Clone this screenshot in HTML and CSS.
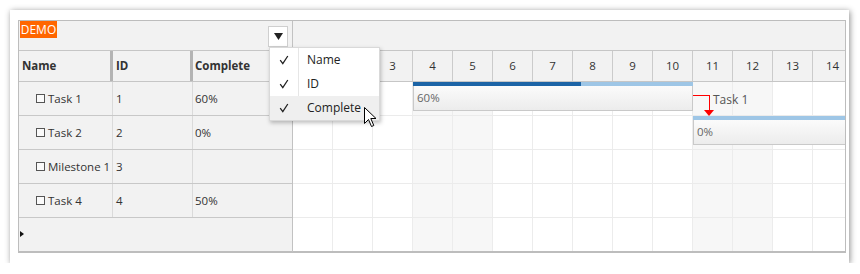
FILE: index.html
```html
<!DOCTYPE html>
<html>
<head>
<meta charset="utf-8">
<link rel="stylesheet" href="styles.css">
</head>
<body>
<div class="frame">
  <div class="gantt">
    <div class="left">
      <div class="toolbar">
        <span class="demo">DEMO</span>
        <span class="ddbtn"><svg width="9" height="7" viewBox="0 0 9 7"><path d="M0 0 H9 L4.5 7 Z" fill="#222"/></svg></span>
      </div>
      <div class="ghead">
        <div class="hc cname">Name</div>
        <div class="hc cid">ID</div>
        <div class="hc ccomp">Complete</div>
      </div>
      <div class="grow">
        <div class="gc cname"><span class="cb"></span>Task 1</div>
        <div class="gc cid">1</div>
        <div class="gc ccomp">60%</div>
      </div>
      <div class="grow">
        <div class="gc cname"><span class="cb"></span>Task 2</div>
        <div class="gc cid">2</div>
        <div class="gc ccomp">0%</div>
      </div>
      <div class="grow">
        <div class="gc cname"><span class="cb"></span>Milestone 1</div>
        <div class="gc cid">3</div>
        <div class="gc ccomp"></div>
      </div>
      <div class="grow">
        <div class="gc cname"><span class="cb"></span>Task 4</div>
        <div class="gc cid">4</div>
        <div class="gc ccomp">50%</div>
      </div>
      <div class="newrow"><span class="tri"></span></div>
    </div>
    <div class="right">
      <div class="ttop"></div>
      <div class="days">
        <div class="d"><span class="hid">1</span></div><div class="d"><span class="hid">2</span></div><div class="d">3</div><div class="d">4</div><div class="d">5</div><div class="d">6</div><div class="d">7</div><div class="d">8</div><div class="d">9</div><div class="d">10</div><div class="d">11</div><div class="d">12</div><div class="d">13</div><div class="d">14</div>
      </div>
      <div class="tbody">
        <div class="trow"><div class="tc"></div><div class="tc"></div><div class="tc"></div><div class="tc we"></div><div class="tc we"></div><div class="tc"></div><div class="tc"></div><div class="tc"></div><div class="tc"></div><div class="tc"></div><div class="tc we"></div><div class="tc we"></div><div class="tc"></div><div class="tc"></div></div>
        <div class="trow"><div class="tc"></div><div class="tc"></div><div class="tc"></div><div class="tc we"></div><div class="tc we"></div><div class="tc"></div><div class="tc"></div><div class="tc"></div><div class="tc"></div><div class="tc"></div><div class="tc we"></div><div class="tc we"></div><div class="tc"></div><div class="tc"></div></div>
        <div class="trow"><div class="tc"></div><div class="tc"></div><div class="tc"></div><div class="tc we"></div><div class="tc we"></div><div class="tc"></div><div class="tc"></div><div class="tc"></div><div class="tc"></div><div class="tc"></div><div class="tc we"></div><div class="tc we"></div><div class="tc"></div><div class="tc"></div></div>
        <div class="trow"><div class="tc"></div><div class="tc"></div><div class="tc"></div><div class="tc we"></div><div class="tc we"></div><div class="tc"></div><div class="tc"></div><div class="tc"></div><div class="tc"></div><div class="tc"></div><div class="tc we"></div><div class="tc we"></div><div class="tc"></div><div class="tc"></div></div>
        <div class="trow last"><div class="tc"></div><div class="tc"></div><div class="tc"></div><div class="tc we"></div><div class="tc we"></div><div class="tc"></div><div class="tc"></div><div class="tc"></div><div class="tc"></div><div class="tc"></div><div class="tc we"></div><div class="tc we"></div><div class="tc"></div><div class="tc"></div></div>

        <div class="bar task1">
          <div class="prog"><div class="done" style="width:60%"></div></div>
          <div class="bbody">60%</div>
        </div>
        <div class="blabel">Task 1</div>
        <div class="link-h"></div>
        <div class="link-v"></div>
        <div class="link-arrow"></div>
        <div class="bar task2">
          <div class="prog"></div>
          <div class="bbody">0%</div>
        </div>
      </div>
    </div>

    <div class="menu">
      <div class="mi"><span class="chk"><svg width="10" height="10" viewBox="0 0 10 10"><path d="M1.2 5.2 L3.8 8.6 L8.8 1" fill="none" stroke="#222" stroke-width="1.3"/></svg></span><span class="lbl">Name</span></div>
      <div class="mi"><span class="chk"><svg width="10" height="10" viewBox="0 0 10 10"><path d="M1.2 5.2 L3.8 8.6 L8.8 1" fill="none" stroke="#222" stroke-width="1.3"/></svg></span><span class="lbl">ID</span></div>
      <div class="mi hover"><span class="chk"><svg width="10" height="10" viewBox="0 0 10 10"><path d="M1.2 5.2 L3.8 8.6 L8.8 1" fill="none" stroke="#222" stroke-width="1.3"/></svg></span><span class="lbl">Complete</span></div>
    </div>
    <svg class="cursor" width="13" height="21" viewBox="0 0 13 21"><path d="M0.5 0.5 L0.5 16.5 L4.5 12.5 L7.5 19.5 L9.8 18.5 L6.8 11.5 L12 11.5 Z" fill="#fff" stroke="#000" stroke-width="1" stroke-linejoin="miter"/></svg>
  </div>
</div>
</body>
</html>
```

FILE: styles.css
```css
* { box-sizing: border-box; }
html, body { margin: 0; padding: 0; background: #fff; }
body {
  font-family: "Open Sans", "Noto Sans", sans-serif;
  font-size: 11.5px;
  color: #333;
}
.frame {
  margin: 10px 0 0 10px;
  width: 839px;
  height: 253px;
  background: #fff;
  box-shadow: 1px 1px 6px rgba(0,0,0,0.45);
  padding: 10px 0 0 8px;
}
.gantt {
  position: relative;
  width: 828px;
  height: 233px;
  border: 1px solid #bdbdbd;
  display: flex;
  overflow: hidden;
}
.left {
  width: 274px;
  flex: none;
  border-right: 1px solid #c2c2c2;
  background: #f2f2f2;
  display: flex;
  flex-direction: column;
}
.toolbar {
  height: 30px;
  border-bottom: 1px solid #c6c6c6;
  display: flex;
  align-items: flex-start;
  justify-content: space-between;
  padding: 0 4px 0 1px;
}
.demo {
  background: #ff6600;
  color: #fff;
  height: 17px;
  width: 37px;
  line-height: 17px;
  text-align: center;
  font-size: 12px;
}
.ddbtn {
  margin-top: 5px;
  width: 20px;
  height: 21px;
  background: #fff;
  border: 1px solid #cfcfcf;
  display: flex;
  align-items: center;
  justify-content: center;
}
.ghead {
  height: 31px;
  display: flex;
  border-bottom: 1px solid #c6c6c6;
}
.hc {
  font-weight: bold;
  color: #333;
  line-height: 30px;
  padding-left: 3px;
  border-right: 3px solid #b4b4b4;
}
.cname { width: 94px; flex: none; }
.cid { width: 80px; flex: none; }
.ccomp { width: 100px; flex: none; }
.hc.ccomp { border-right: none; padding-left: 2px; }
.grow {
  height: 34px;
  display: flex;
  border-bottom: 1px solid #c8c8c8;
}
.gc {
  line-height: 33px;
  padding-left: 3px;
  border-right: 1px solid #dadada;
  white-space: nowrap;
  overflow: hidden;
}
.gc.cname { padding-left: 17px; display: flex; align-items: center; }
.gc.ccomp { border-right: none; padding-left: 2px; }
.cb {
  display: inline-block;
  width: 9px;
  height: 9px;
  border: 1px solid #555;
  background: #fafafa;
  margin-right: 3px;
}
.newrow {
  height: 34px;
  border-bottom: 1px solid #bdbdbd;
  padding: 13px 0 0 1px;
}
.tri {
  display: block;
  width: 0;
  height: 0;
  border-top: 3.5px solid transparent;
  border-bottom: 3.5px solid transparent;
  border-left: 4px solid #111;
}
.right {
  flex: 1;
  overflow: hidden;
  display: flex;
  flex-direction: column;
}
.ttop {
  height: 30px;
  flex: none;
  background: #f2f2f2;
  border-bottom: 1px solid #c6c6c6;
}
.days {
  height: 31px;
  flex: none;
  display: flex;
  background: #f2f2f2;
  border-bottom: 1px solid #c6c6c6;
}
.d {
  width: 40px;
  flex: none;
  text-align: center;
  line-height: 30px;
  border-right: 1px solid #cbcbcb;
  color: #333;
}
.hid { visibility: hidden; }
.tbody {
  position: relative;
  flex: 1;
}
.trow {
  height: 34px;
  display: flex;
  border-bottom: 1px solid #ebebeb;
}
.trow.last { border-bottom: 1px solid #bdbdbd; }
.tc {
  width: 40px;
  flex: none;
  border-right: 1px solid #ececec;
}
.tc.we { background: #f7f7f7; }
.bar {
  position: absolute;
}
.bar .prog {
  height: 4px;
  background: #9ec6e6;
}
.bar .done {
  height: 4px;
  background: #1c64a6;
}
.bar .bbody {
  height: 25px;
  border: 1px solid #c9c9c9;
  border-top: none;
  background: linear-gradient(#fbfbfb, #ececec);
  color: #666;
  line-height: 23px;
  padding-left: 3px;
}
.task1 { left: 120px; top: 0; width: 280px; }
.task2 { left: 400px; top: 34px; width: 200px; }
.task2 .bbody { border-right: none; }
.blabel {
  position: absolute;
  left: 420px;
  top: 9px;
  color: #555;
  line-height: 18px;
  font-size: 12px;
}
.link-h {
  position: absolute;
  left: 400px;
  top: 13px;
  width: 17px;
  height: 1px;
  background: #ff0000;
  z-index: 2;
}
.link-v {
  position: absolute;
  left: 416px;
  top: 13px;
  width: 1px;
  height: 16px;
  background: #ff0000;
  z-index: 2;
}
.link-arrow {
  position: absolute;
  left: 411px;
  top: 28px;
  width: 0;
  height: 0;
  border-left: 5.5px solid transparent;
  border-right: 5.5px solid transparent;
  border-top: 6px solid #ff0000;
  z-index: 2;
}
.menu {
  position: absolute;
  left: 250px;
  top: 26px;
  width: 111px;
  height: 74px;
  background: #fff;
  border: 1px solid #d9d9d9;
  box-shadow: 1px 2px 4px rgba(0,0,0,0.25);
  display: flex;
  flex-direction: column;
  font-size: 12px;
}
.mi {
  height: 24px;
  display: flex;
  align-items: stretch;
  color: #222;
}
.mi .chk {
  width: 28px;
  flex: none;
  display: flex;
  align-items: center;
  justify-content: center;
}
.mi .lbl {
  flex: 1;
  border-left: 1px solid #e6e6e6;
  padding-left: 8px;
  line-height: 24px;
}
.mi.hover { background: #efefef; }
.mi.hover .lbl { border-left-color: transparent; }
.cursor {
  position: absolute;
  left: 345px;
  top: 86px;
}
```
